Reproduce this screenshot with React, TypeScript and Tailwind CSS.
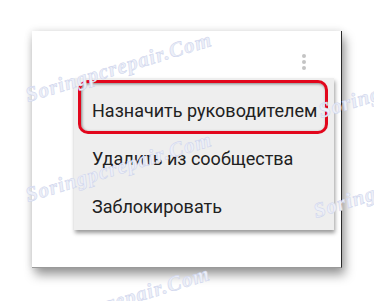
const items = ['Назначить руководителем', 'Удалить из сообщества', 'Заблокировать'];

function Mark({ className }: { className: string }) {
  return (
    <span
      className={`pointer-events-none absolute whitespace-nowrap text-[21px] italic font-bold tracking-[1px] text-[#eceff8] [font-family:'Liberation_Serif',serif] [-webkit-text-stroke:0.5px_#cdd3ec] ${className}`}
    >
      Soringpcrepair.Com
    </span>
  );
}

export default function App() {
  return (
    <div className="relative w-[374px] h-[301px] overflow-hidden bg-white pt-[31px] pl-[32px] [font-family:Roboto,'Noto_Sans',sans-serif]">
      <div className="flex flex-col w-[310px] h-[237px] bg-white border-r border-b border-r-[#2a2a2a] border-b-[#9a9a9a] shadow-[3px_7px_10px_rgba(0,0,0,0.38),0_0_8px_rgba(0,0,0,0.12)]">
        <div className="flex justify-end pt-[23px] pr-[35px] h-[47px]">
          <div className="flex flex-col gap-[2px]">
            <span className="w-[4px] h-[4px] rounded-full bg-[#c4c4c4]" />
            <span className="w-[4px] h-[4px] rounded-full bg-[#c4c4c4]" />
            <span className="w-[4px] h-[4px] rounded-full bg-[#c4c4c4]" />
          </div>
        </div>
        <div className="relative ml-[42px] w-[260px] bg-[#eeeeee] pt-[8px] shadow-[1px_3px_4px_rgba(0,0,0,0.4)]">
          {items.map((t) => (
            <div key={t} className="flex items-center h-[48px] pl-[18px] text-[18px] text-[#212121]">
              {t}
            </div>
          ))}
          <div className="pointer-events-none absolute left-[4px] top-[2px] w-[250px] h-[54px] rounded-[10px] border-[3px] border-[#e2061c] shadow-[inset_1px_1px_3px_rgba(0,0,0,0.45)]" />
        </div>
      </div>
      <Mark className="left-[22px] top-[52px] -rotate-[17deg]" />
      <Mark className="left-[315px] top-[68px] -rotate-[17deg]" />
      <Mark className="left-[22px] top-[152px] -rotate-[17deg]" />
      <Mark className="left-[310px] top-[168px] -rotate-[17deg]" />
      <Mark className="left-[20px] top-[286px] -rotate-[17deg]" />
    </div>
  );
}
